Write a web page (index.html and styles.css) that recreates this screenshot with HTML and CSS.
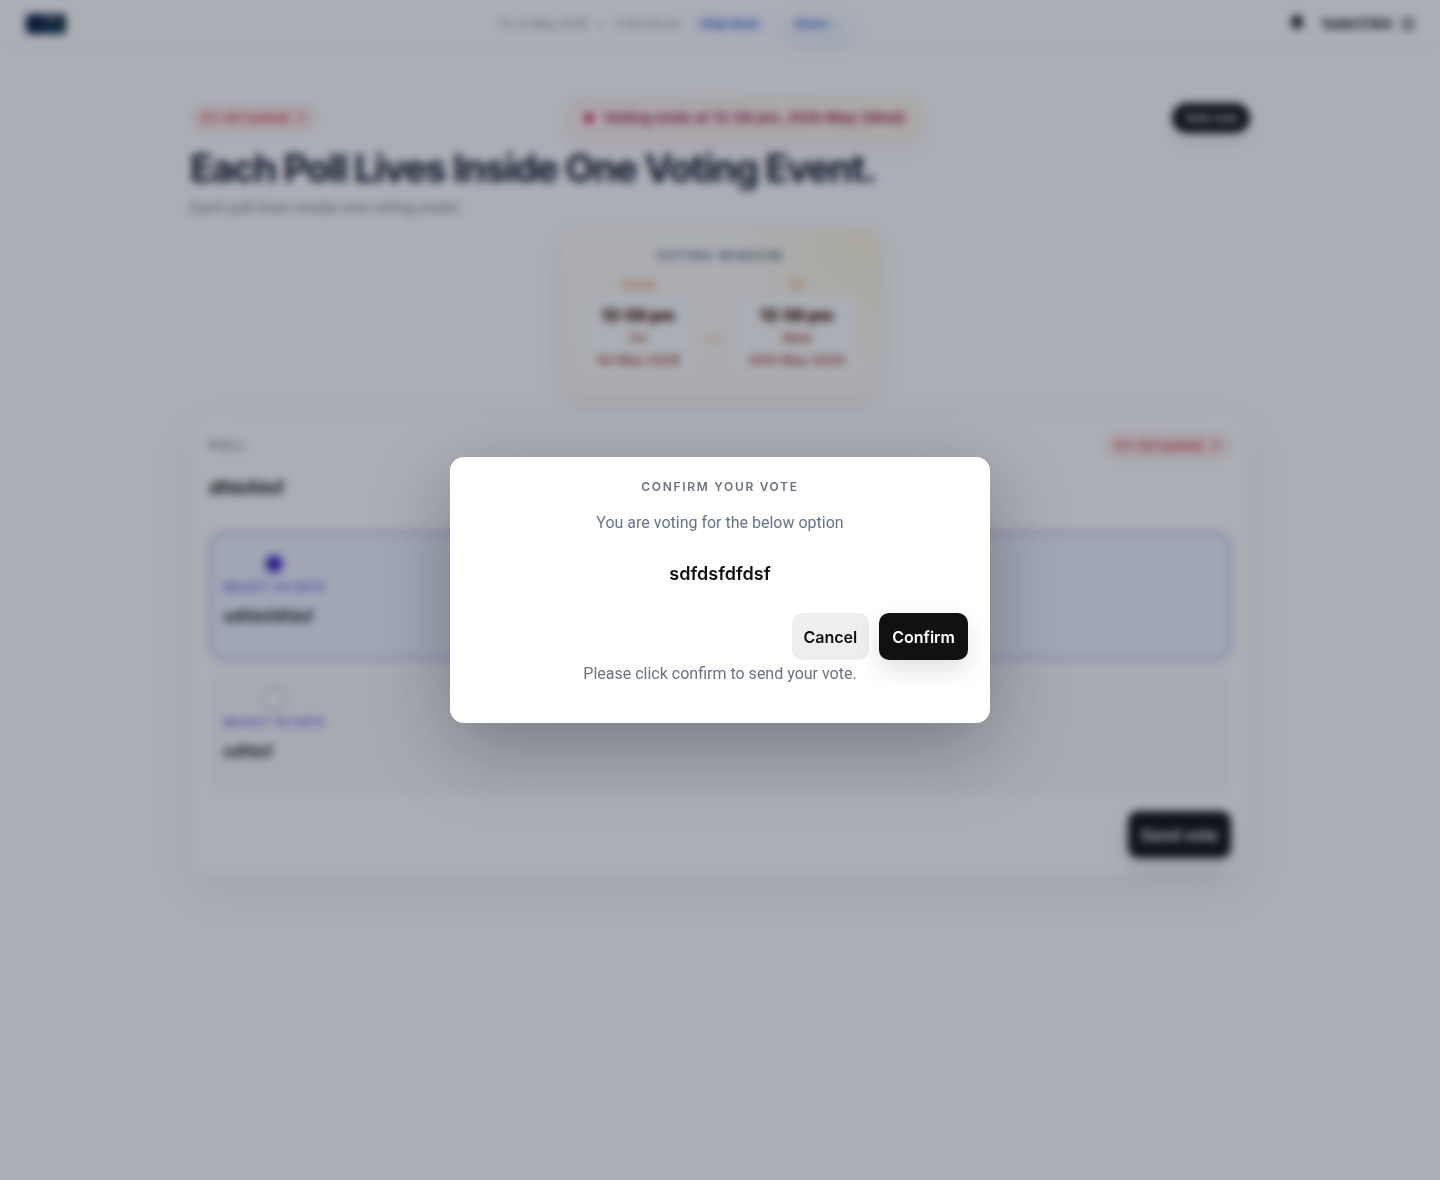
FILE: index.html
```html
<!DOCTYPE html>
<html lang="en">
<head>
<meta charset="utf-8">
<meta name="viewport" content="width=device-width, initial-scale=1">
<title>Voting event</title>
<link rel="stylesheet" href="styles.css">
</head>
<body>
<header class="topbar">
  <a class="logo" href="#" aria-label="Home">
    <svg width="40" height="20" viewBox="0 0 40 20"><defs><linearGradient id="g" x1="0" x2="1"><stop offset="0" stop-color="#0a1a44"/><stop offset="1" stop-color="#0d2f38"/></linearGradient></defs><rect width="40" height="20" rx="3" fill="url(#g)"/><path d="M19 5h13" stroke="#6a7482" stroke-width="4"/><path d="M20 16h12" stroke="#0d6278" stroke-width="3"/></svg>
  </a>
  <div class="topbar-mid">
    <span class="clock">Fri, 8 May 2026</span>
    <span class="clock">•</span>
    <span class="clock">3:40:29 pm</span>
    <a class="help" href="#">Help desk</a>
    <button class="share" type="button">Share <span class="caret">⌄</span></button>
  </div>
  <div class="account">
    <svg width="16" height="18" viewBox="0 0 16 18"><path d="M8 0a5 5 0 0 0-5 5v4l-2 3h14l-2-3V5a5 5 0 0 0-5-5zM6 13h4a2 2 0 0 1-4 0z" fill="#111"/></svg>
    <span class="user">Valid E164</span>
    <svg width="16" height="16" viewBox="0 0 16 16"><path d="M1 3h14M1 8h14M1 13h14" stroke="#333" stroke-width="2"/></svg>
  </div>
</header>

<main class="page">
  <div class="status-row">
    <span class="polled">0% (0/1 polled) <span class="arrow">↗</span></span>
    <span class="deadline"><span class="dot"></span>Voting ends at 12:38 pm, 20th May (Wed)</span>
    <button class="vote-now" type="button">Vote now</button>
  </div>
  <h1>Each Poll Lives Inside One Voting Event.</h1>
  <p class="lead">Each poll lives inside one voting event.</p>

  <section class="window">
    <h2>Voting window</h2>
    <div class="window-grid">
      <div class="moment"><span class="moment-label">From</span>
        <div class="moment-box"><strong>12:38 pm</strong><span>Fri</span><span>1st May 2026</span></div></div>
      <span class="dash">—</span>
      <div class="moment"><span class="moment-label">To</span>
        <div class="moment-box"><strong>12:38 pm</strong><span>Wed</span><span>20th May 2026</span></div></div>
    </div>
  </section>

  <section class="poll">
    <div class="poll-head"><span class="eyebrow">Poll</span><span class="polled">0% (0/1 polled) <span class="arrow">↗</span></span></div>
    <h3>dfdsfdsf</h3>
    <label class="option selected">
      <span class="pick"><input type="radio" name="vote" checked>Select to vote</span>
      <span class="choice">sdfdsfdfdsf</span>
    </label>
    <label class="option">
      <span class="pick"><input type="radio" name="vote">Select to vote</span>
      <span class="choice">sdfdsf</span>
    </label>
    <div class="poll-actions"><button class="btn primary" type="button">Send vote</button></div>
  </section>
</main>

<div class="overlay">
  <div class="dialog" role="dialog" aria-modal="true" aria-labelledby="confirm-title">
    <h2 id="confirm-title">Confirm your vote</h2>
    <p class="note">You are voting for the below option</p>
    <p class="picked">sdfdsfdfdsf</p>
    <div class="dialog-actions">
      <button class="btn" type="button">Cancel</button>
      <button class="btn primary" type="button">Confirm</button>
    </div>
    <p class="note hint">Please click confirm to send your vote.</p>
  </div>
</div>
</body>
</html>
```
FILE: styles.css
```css
* { box-sizing: border-box; }
body { margin: 0; min-height: 100vh; background: #fff; color: #111; font: 16px/24px Inter, "Liberation Sans", sans-serif; }
h1, h2, h3, p { margin: 0; }
button { font: inherit; border: 0; cursor: pointer; }
a { text-decoration: none; }

.topbar { display: grid; grid-template-columns: 1fr auto 1fr; align-items: center; height: 48px; padding: 0 24px; border-bottom: 1px solid #f6f7f8; }
.logo { display: flex; padding-left: 2px; }
.topbar-mid { display: flex; align-items: center; gap: 10px; margin-right: 88px; }
.clock { font-size: 12px; color: #8b919b; }
.help, .share { font-size: 12px; font-weight: 700; line-height: 16px; color: #3f68dc; border-radius: 16px; padding: 4px 10px; }
.help { background: #f4f8ff; }
.share { background: #f9fbff; margin-left: 4px; padding: 4px 12px; box-shadow: 0 8px 18px rgba(37, 99, 235, .12); }
.caret { color: #93b4f5; }
.account { display: flex; align-items: center; justify-content: flex-end; gap: 8px; }
.user { font-size: 14px; font-weight: 700; margin-left: 8px; }

.page { max-width: 1060px; margin: 0 auto; padding: 48px 0; }
.status-row { display: flex; align-items: center; justify-content: space-between; height: 44px; }
.polled { font-size: 12px; font-weight: 600; line-height: 16px; color: #dc3c3c; background: #fdecec; border: 1px solid #fdf0e6; border-radius: 14px; padding: 5px 10px; white-space: nowrap; }
.arrow { margin-left: 4px; }
.deadline { display: flex; align-items: center; gap: 10px; height: 42px; padding: 0 14px; font-size: 15px; font-weight: 700; color: #b0305a; border-radius: 14px; background: linear-gradient(100deg, #fff1f2, #fef9e7); border: 1px solid #fdeee0; box-shadow: 0 8px 20px rgba(225, 29, 72, .07); }
.dot { width: 10px; height: 10px; border-radius: 50%; background: #e11d48; }
.vote-now { height: 30px; padding: 0 12px; border-radius: 15px; background: #111; color: #fff; font-size: 12px; font-weight: 500; box-shadow: 0 8px 18px rgba(0, 0, 0, .08); }
h1 { margin-top: 4px; font-size: 38px; line-height: 48px; font-weight: 700; letter-spacing: -0.035em; color: #0f172a; }
.lead { margin-top: 4px; color: #7c8594; }
.lead, .note { font-family: Roboto, "Liberation Sans", sans-serif; }

.window { width: 320px; margin: 9px auto 0; padding: 14px 22px 20px; text-align: center; border-radius: 18px; border: 1px solid #fdf3e0; background: radial-gradient(circle at top right, #fdf5d8, transparent 40%), linear-gradient(#fffefa, #fff9f5); box-shadow: 0 8px 28px rgba(124, 45, 18, .07); }
.window h2 { font-size: 12px; line-height: 24px; font-weight: 700; letter-spacing: .14em; text-transform: uppercase; color: #646b78; }
.window-grid { display: flex; align-items: center; justify-content: space-between; }
.moment { display: flex; flex-direction: column; align-items: center; }
.moment-label { font-size: 11px; line-height: 24px; margin-top: 5px; font-weight: 600; letter-spacing: .08em; text-transform: uppercase; color: #ea9a5a; }
.moment-box { display: flex; flex-direction: column; min-width: 110px; padding: 6px 12px 4px; border-radius: 12px; background: #fff; font-size: 13px; line-height: 22px; font-weight: 700; color: #b4604f; white-space: nowrap; }
.moment-box strong { font-size: 16px; line-height: 24px; color: #431407; }
.dash { margin-top: 32px; font-weight: 700; color: #f0a35c; }

.poll { margin-top: 17px; padding: 18px 18px 14px; border-radius: 16px; border: 1px solid #f9fafb; background: #fff; box-shadow: 0 18px 50px rgba(15, 23, 42, .06); }
.poll-head { display: flex; align-items: center; justify-content: space-between; height: 28px; }
.eyebrow { font-size: 12px; font-weight: 600; letter-spacing: .16em; text-transform: uppercase; color: #6b7280; }
h3 { margin: 14px 0 30px; font-size: 18px; line-height: 28px; }
.option { display: flex; flex-direction: column; align-items: flex-start; gap: 6px; height: 128px; margin-bottom: 7px; padding: 20px 14px; border-radius: 16px; background: #f8fafb; }
.selected { padding: 18px 12px; border: 2px solid #c0bbee; background: #eef4ff; box-shadow: 0 0 0 1px #cfcaf3; }
.pick { display: flex; flex-direction: column; align-items: center; font-size: 11px; line-height: 22px; font-weight: 700; letter-spacing: .06em; text-transform: uppercase; color: #6b54dc; }
.pick input { appearance: none; width: 24px; height: 24px; margin: 0; border: 2px solid #c4c8ce; border-radius: 50%; background: #fff; }
.pick input:checked { border: 4px solid #d9d8f8; background: #3a1fc4; }
.choice { font-weight: 600; }
.poll-actions { display: flex; justify-content: flex-end; padding: 9px 0 2px; }

.btn { height: 47px; padding: 0 12px; border-radius: 10px; font-weight: 600; color: #111; background: #eee; }
.primary { padding: 0 13px; color: #fff; background: #111; box-shadow: 0 10px 24px rgba(0, 0, 0, .12); }

/* The page behind the dialog is dimmed and softened */
.overlay { position: fixed; inset: 0; display: flex; align-items: center; justify-content: center; padding: 20px; background: rgba(15, 23, 42, .35); backdrop-filter: blur(4px); }
.dialog { width: 100%; max-width: 540px; padding: 18px 22px 37px; text-align: center; border-radius: 14px; background: #fff; box-shadow: 0 24px 80px rgba(0, 0, 0, .28); }
.dialog h2 { font-size: 12px; line-height: 24px; font-weight: 600; letter-spacing: .14em; text-transform: uppercase; color: #6b7280; }
.note { margin-top: 12px; color: #64748b; }
.picked { margin-top: 25px; font-size: 18px; line-height: 28px; font-weight: 600; }
.dialog-actions { display: flex; justify-content: flex-end; gap: 10px; margin-top: 25px; }
.hint { margin-top: 2px; color: #6b7280; }
```
